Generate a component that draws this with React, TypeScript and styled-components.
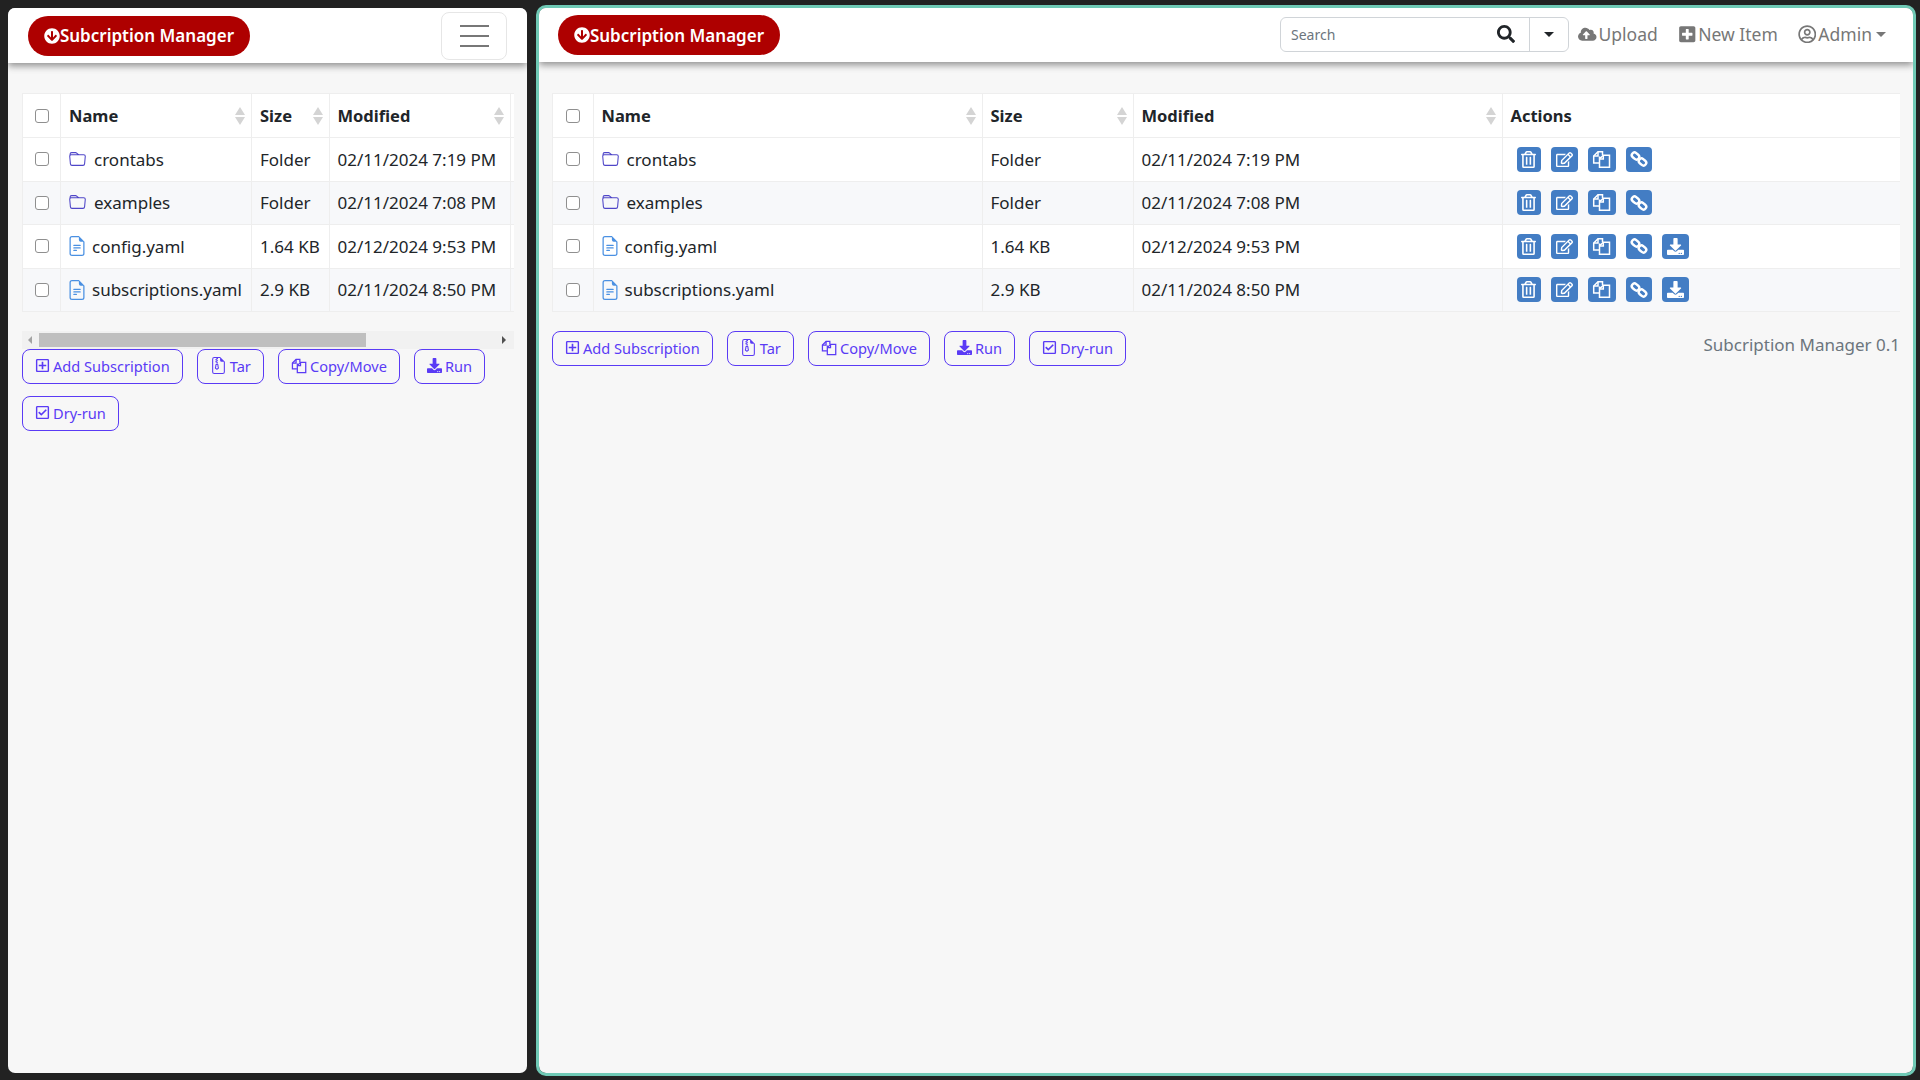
import React from "react";
import styled, { createGlobalStyle } from "styled-components";
import {
  FaArrowCircleDown,
  FaCloudUploadAlt,
  FaDownload,
  FaPlusSquare,
  FaRegCheckSquare,
  FaRegEdit,
  FaRegPlusSquare,
  FaRegTrashAlt,
  FaRegUserCircle,
  FaSearch,
} from "react-icons/fa";
import { BsFileEarmarkText, BsFileEarmarkZip, BsFolder } from "react-icons/bs";

const GlobalStyle = createGlobalStyle`
  html, body {
    margin: 0;
    height: 100%;
    background: #222222;
    font-family: "Noto Sans", "Liberation Sans", sans-serif;
    font-size: 17px;
    color: #212529;
  }
  * { box-sizing: border-box; }
`;

const Screen = styled.div`
  display: flex;
  gap: 6px;
  height: 1080px;
  padding: 5px 4px 4px 5px;
`;

const Panel = styled.section<{ $active?: boolean }>`
  display: flex;
  flex-direction: column;
  flex: ${(p) => (p.$active ? "1" : "0 0 525px")};
  min-width: 0;
  background: #f7f7f7;
  background-clip: padding-box;
  border: 3px solid ${(p) => (p.$active ? "#6fc9b5" : "transparent")};
  border-radius: 10px;
  overflow: hidden;
`;

const Navbar = styled.nav<{ $tall?: boolean }>`
  display: flex;
  align-items: center;
  justify-content: space-between;
  height: ${(p) => (p.$tall ? "55px" : "54px")};
  padding: 0 20px 0 ${(p) => (p.$tall ? "20px" : "19px")};
  background: #ffffff;
  box-shadow: 0 3px 7px rgba(0, 0, 0, 0.42);
`;

const Brand = styled.a`
  display: flex;
  align-items: center;
  justify-content: center;
  width: 222px;
  height: 40px;
  border-radius: 20px;
  background: #ae0000;
  color: #ffffff;
  font-size: 17px;
  font-weight: 600;
  white-space: nowrap;

  svg {
    font-size: 16px;
  }
`;

const Toggler = styled.button`
  display: flex;
  flex-direction: column;
  align-items: center;
  justify-content: center;
  gap: 8px;
  width: 66px;
  height: 48px;
  padding: 0;
  background: transparent;
  border: 1px solid #e6e6e6;
  border-radius: 8px;

  span {
    width: 29px;
    height: 2px;
    background: #777777;
  }
`;

const NavRight = styled.div`
  display: flex;
  align-items: center;
  margin: 0 7px 2px 0;
`;

const SearchGroup = styled.div`
  display: flex;
  width: 289px;
  height: 35px;
  margin-right: 9px;
  background: #ffffff;
  border: 1px solid #d0d4d8;
  border-radius: 6px;
`;

const SearchInput = styled.input`
  flex: 1;
  min-width: 0;
  padding: 0 0 0 10px;
  border: 0;
  outline: 0;
  background: transparent;
  font-family: inherit;
  font-size: 14px;

  &::placeholder {
    color: #6c757d;
  }
`;

const SearchButton = styled.span`
  display: flex;
  align-items: center;
  padding-right: 14px;
  font-size: 18px;
  color: #212529;
`;

const SearchCaret = styled.span`
  display: flex;
  align-items: center;
  justify-content: center;
  width: 39px;
  border-left: 1px solid #d0d4d8;
`;

const Caret = styled.i<{ $color?: string; $gap?: number }>`
  display: block;
  margin-left: ${(p) => p.$gap ?? 0}px;
  border-top: 5px solid ${(p) => p.$color ?? "#212529"};
  border-left: 5px solid transparent;
  border-right: 5px solid transparent;
`;

const NavLink = styled.a`
  display: flex;
  align-items: center;
  gap: 2px;
  margin-left: 20px;
  color: #777777;
  white-space: nowrap;
  font-size: 17.5px;

  svg {
    font-size: 18.5px;
  }

  &:first-of-type {
    margin-left: 0;
  }
`;

const Content = styled.main<{ $tight?: boolean }>`
  padding: ${(p) => (p.$tight ? "30px 13px 0 14px" : "31px 13px 0 13px")};
`;

const TableClip = styled.div`
  overflow: hidden;
`;

const Table = styled.table`
  table-layout: fixed;
  border-collapse: collapse;
  background: #ffffff;

  th,
  td {
    padding: 0 8px;
    border: 1px solid #eeeeee;
    text-align: left;
    white-space: nowrap;
    overflow: hidden;
  }

  th {
    height: 44px;
    font-size: 16.5px;
    font-weight: 700;
  }

  td {
    height: 43.5px;
  }

  tbody tr:nth-child(even) {
    background: #f7f8fa;
  }
`;

const HeadCell = styled.div`
  display: flex;
  align-items: center;
  justify-content: space-between;
  padding-right: 0;
`;

const SortArrows = styled.span`
  display: flex;
  flex-direction: column;
  gap: 2px;
  margin-right: -2px;

  &::before,
  &::after {
    content: "";
    display: block;
    border-left: 5px solid transparent;
    border-right: 5px solid transparent;
  }
  &::before {
    border-bottom: 8px solid #d4d4d4;
  }
  &::after {
    border-top: 8px solid #d4d4d4;
  }
`;

const Check = styled.input.attrs({ type: "checkbox" })`
  display: block;
  appearance: none;
  width: 14px;
  height: 14px;
  margin: 0 auto;
  background: #ffffff;
  border: 1.5px solid #8f8f8f;
  border-radius: 3px;
`;

const NameCell = styled.div<{ $folder?: boolean }>`
  display: flex;
  align-items: center;
  gap: ${(p) => (p.$folder ? "8px" : "5px")};

  svg {
    flex: none;
    margin-left: ${(p) => (p.$folder ? "0" : "-2px")};
    font-size: ${(p) => (p.$folder ? "17px" : "20px")};
    color: ${(p) => (p.$folder ? "#4f46c8" : "#4a90e2")};
  }
`;

const Actions = styled.div`
  display: flex;
  align-items: center;
  gap: 10px;
  padding-left: 6px;
`;

const ActionButton = styled.span<{ $w: number }>`
  display: flex;
  align-items: center;
  justify-content: center;
  width: ${(p) => p.$w}px;
  height: 25px;
  background: #437dc4;
  border-radius: 4px;
  color: #ffffff;
  font-size: 17px;
`;

const ScrollTrack = styled.div`
  display: flex;
  align-items: center;
  height: 18px;
  padding: 0 8px 0 6px;
  background: #f1f1f1;
`;

const ScrollThumb = styled.div`
  width: 327px;
  height: 14px;
  margin-left: 7px;
  background: #bfbfbf;
`;

const ScrollArrow = styled.i<{ $right?: boolean }>`
  display: block;
  margin-left: ${(p) => (p.$right ? "auto" : "0")};
  border-top: 4px solid transparent;
  border-bottom: 4px solid transparent;
  ${(p) =>
    p.$right
      ? "border-left: 4px solid #505050;"
      : "border-right: 4px solid #a3a3a3;"}
`;

const BottomBar = styled.div`
  display: flex;
  align-items: flex-start;
  justify-content: space-between;
  margin-top: 19px;
`;

const LeftBottom = styled.div`
  width: 100%;
`;

const ButtonRow = styled.div`
  display: flex;
  flex-wrap: wrap;
  gap: 12px 14px;
`;

const OutlineButton = styled.button`
  display: flex;
  align-items: center;
  gap: 3px;
  height: 35px;
  padding: 0 12px 2px;
  background: transparent;
  border: 1px solid #5a3bf5;
  border-radius: 8px;
  color: #5a3bf5;
  font-family: inherit;
  font-size: 14.6px;
  white-space: nowrap;

  svg {
    font-size: 15px;
  }
`;

const TarIcon = styled(BsFileEarmarkZip)`
  && {
    font-size: 17px;
  }
`;

const Footer = styled.span`
  margin-top: 2px;
  color: #6c757d;
  white-space: nowrap;
`;

// font awesome 4 "files-o", not in the packages
function CopyIcon({ size }: { size: number }) {
  return (
    <svg width={size} height={size} viewBox="0 0 19 19" fill="none" stroke="currentColor" strokeWidth="1.5">
      <path d="M7 13H1.700V6L6 1.700h4.500V5" />
      <path d="M6 1.700V6H1.700" />
      <path d="M7.500 6.500V17.300h10V5.200h-6.200L7.500 9z" />
      <path d="M11.300 5.200V9H7.500" />
    </svg>
  );
}

// font awesome 4 "chain" leans the other way from the one in the package
function ChainIcon() {
  return (
    <svg width="18" height="18" viewBox="0 0 18 18" fill="none" stroke="currentColor" strokeWidth="2.400">
      <rect x="1.500" y="3.300" width="8" height="5.400" rx="2.700" transform="rotate(40 5.500 6)" />
      <rect x="8.500" y="9.300" width="8" height="5.400" rx="2.700" transform="rotate(40 12.500 12)" />
    </svg>
  );
}

type Row = {
  name: string;
  size: string;
  modified: string;
  folder?: boolean;
};

const rows: Row[] = [
  { name: "crontabs", size: "Folder", modified: "02/11/2024 7:19 PM", folder: true },
  { name: "examples", size: "Folder", modified: "02/11/2024 7:08 PM", folder: true },
  { name: "config.yaml", size: "1.64 KB", modified: "02/12/2024 9:53 PM" },
  { name: "subscriptions.yaml", size: "2.9 KB", modified: "02/11/2024 8:50 PM" },
];

function RowActions({ folder }: { folder?: boolean }) {
  return (
    <Actions>
      <ActionButton $w={24}>
        <FaRegTrashAlt />
      </ActionButton>
      <ActionButton $w={27}>
        <FaRegEdit />
      </ActionButton>
      <ActionButton $w={28}>
        <CopyIcon size={19} />
      </ActionButton>
      <ActionButton $w={26}>
        <ChainIcon />
      </ActionButton>
      {!folder && (
        <ActionButton $w={27}>
          <FaDownload />
        </ActionButton>
      )}
    </Actions>
  );
}

function FileTable({ widths, actions }: { widths: number[]; actions?: boolean }) {
  return (
    <TableClip>
      <Table style={{ width: widths.reduce((a, b) => a + b, 0) }}>
        <colgroup>
          {widths.map((w, i) => (
            <col key={i} style={{ width: w }} />
          ))}
        </colgroup>
        <thead>
          <tr>
            <th>
              <Check />
            </th>
            {["Name", "Size", "Modified"].map((h) => (
              <th key={h}>
                <HeadCell>
                  {h}
                  <SortArrows />
                </HeadCell>
              </th>
            ))}
            <th>{actions && "Actions"}</th>
          </tr>
        </thead>
        <tbody>
          {rows.map((r) => (
            <tr key={r.name}>
              <td>
                <Check />
              </td>
              <td>
                <NameCell $folder={r.folder}>
                  {r.folder ? <BsFolder /> : <BsFileEarmarkText />}
                  {r.name}
                </NameCell>
              </td>
              <td>{r.size}</td>
              <td>{r.modified}</td>
              <td>{actions && <RowActions folder={r.folder} />}</td>
            </tr>
          ))}
        </tbody>
      </Table>
    </TableClip>
  );
}

function Buttons() {
  return (
    <ButtonRow>
      <OutlineButton>
        <FaRegPlusSquare />
        Add Subscription
      </OutlineButton>
      <OutlineButton>
        <TarIcon />
        Tar
      </OutlineButton>
      <OutlineButton>
        <CopyIcon size={16} />
        Copy/Move
      </OutlineButton>
      <OutlineButton>
        <FaDownload />
        Run
      </OutlineButton>
      <OutlineButton>
        <FaRegCheckSquare />
        Dry-run
      </OutlineButton>
    </ButtonRow>
  );
}

function BrandLink() {
  return (
    <Brand>
      <FaArrowCircleDown />
      Subcription Manager
    </Brand>
  );
}

export default function App() {
  return (
    <>
      <GlobalStyle />
      <Screen>
        <Panel>
          <Navbar $tall>
            <BrandLink />
            <Toggler>
              <span />
              <span />
              <span />
            </Toggler>
          </Navbar>
          <Content $tight>
            <FileTable widths={[38, 191, 77.5, 181.5, 400]} />
            <BottomBar>
              <LeftBottom>
                <ScrollTrack>
                  <ScrollArrow />
                  <ScrollThumb />
                  <ScrollArrow $right />
                </ScrollTrack>
                <Buttons />
              </LeftBottom>
            </BottomBar>
          </Content>
        </Panel>
        <Panel $active>
          <Navbar>
            <BrandLink />
            <NavRight>
              <SearchGroup>
                <SearchInput placeholder="Search" readOnly />
                <SearchButton>
                  <FaSearch />
                </SearchButton>
                <SearchCaret>
                  <Caret />
                </SearchCaret>
              </SearchGroup>
              <NavLink>
                <FaCloudUploadAlt />
                Upload
              </NavLink>
              <NavLink>
                <FaPlusSquare />
                New Item
              </NavLink>
              <NavLink>
                <FaRegUserCircle />
                Admin
                <Caret $color="#777777" $gap={2} />
              </NavLink>
            </NavRight>
          </Navbar>
          <Content>
            <FileTable widths={[40.5, 389, 151, 369, 398.5]} actions />
            <BottomBar>
              <Buttons />
              <Footer>Subcription Manager 0.1</Footer>
            </BottomBar>
          </Content>
        </Panel>
      </Screen>
    </>
  );
}
